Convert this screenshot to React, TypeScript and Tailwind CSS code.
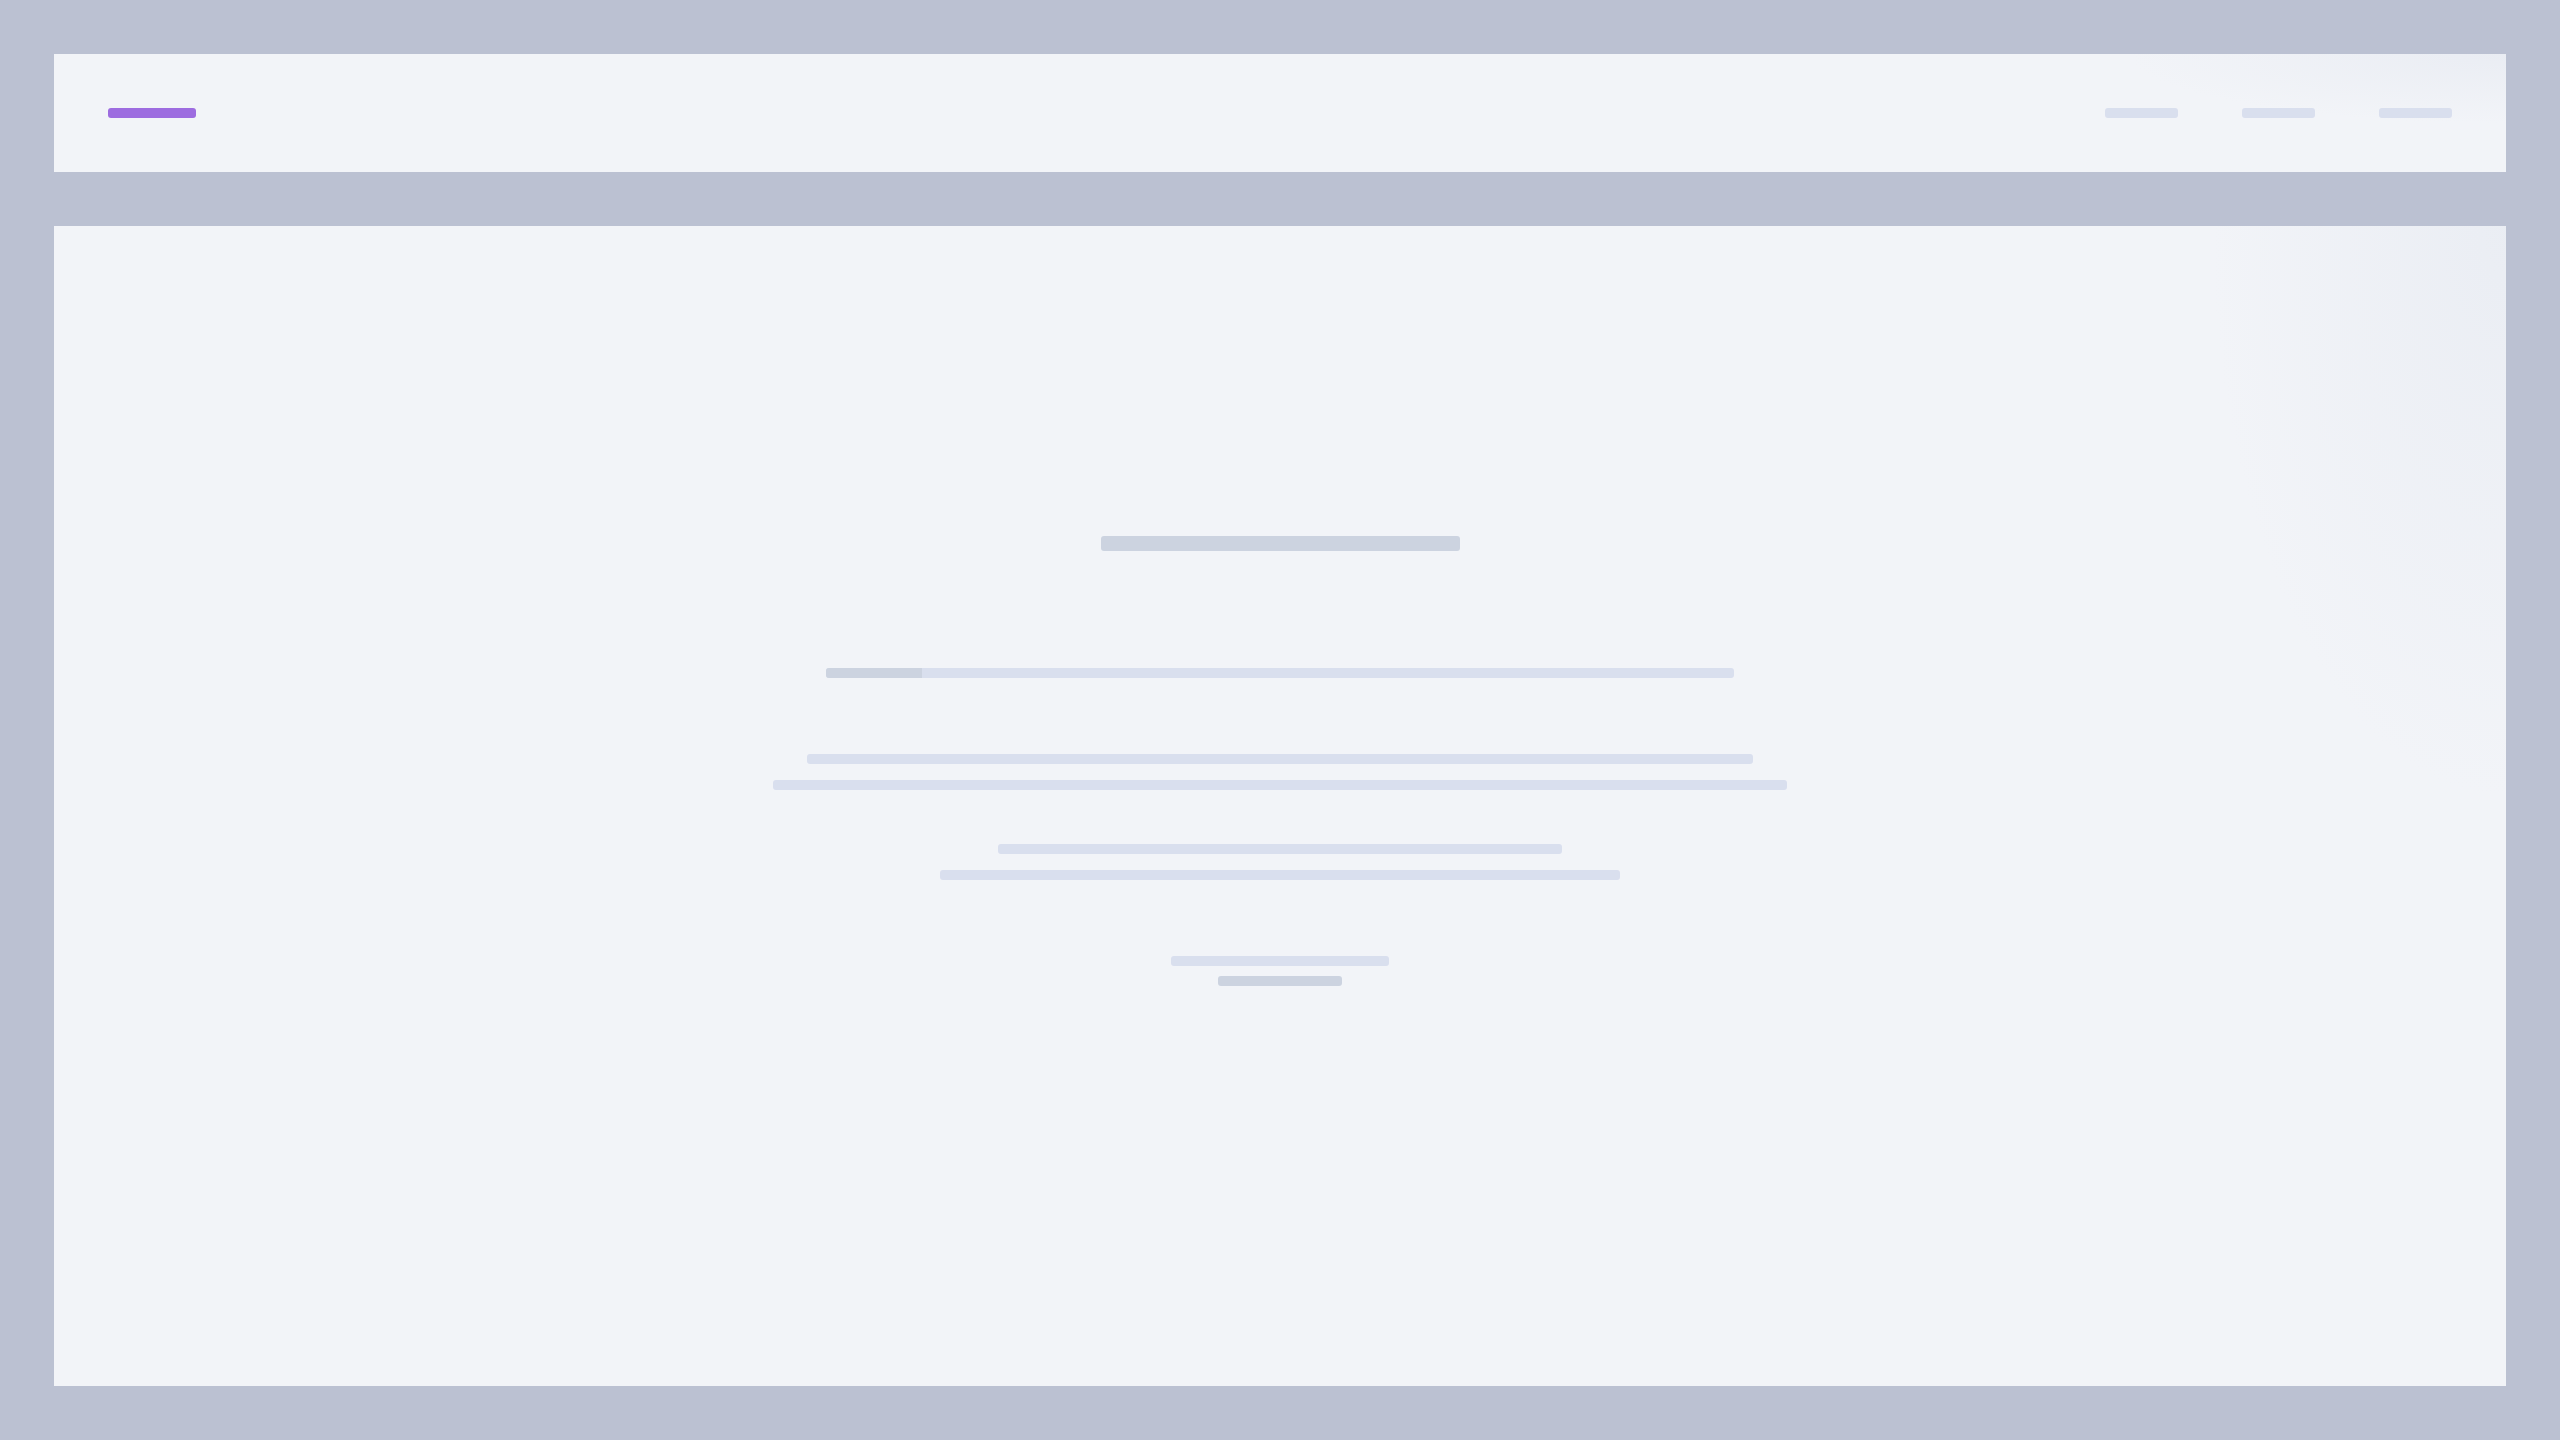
function Bar({ className }: { className: string }) {
    return <div className={`rounded-[3px] ${className}`} />;
}

function Header() {
    return (
        <div className="relative flex h-[118px] items-center justify-between overflow-hidden bg-[#f2f4f8] px-[54px]">
            <div className="pointer-events-none absolute right-0 top-0 h-[70px] w-[380px] bg-[radial-gradient(ellipse_at_top_right,rgba(226,230,239,0.5),rgba(242,244,248,0)_70%)]" />
            <Bar className="relative h-[10px] w-[88px] bg-[#9d6ce0]" />
            <div className="relative flex items-center gap-[64px]">
                <Bar className="h-[10px] w-[73px] bg-[#d9dfee]" />
                <Bar className="h-[10px] w-[73px] bg-[#d9dfee]" />
                <Bar className="h-[10px] w-[73px] bg-[#d9dfee]" />
            </div>
        </div>
    );
}

function Progress() {
    return (
        <div className="h-[10px] w-[908px] overflow-hidden rounded-[3px] bg-[#d9dfee]">
            <div className="h-full w-[96px] bg-[#ccd3e0]" />
        </div>
    );
}

export default function App() {
    return (
        <div className="flex h-[1440px] w-[2560px] flex-col gap-[54px] bg-[#bbc1d2] p-[54px]">
            <Header />
            <div className="relative flex flex-1 flex-col items-center overflow-hidden bg-[#f2f4f8] pt-[310px]">
                <div className="pointer-events-none absolute right-0 top-0 h-[620px] w-[320px] bg-[radial-gradient(ellipse_at_top_right,rgba(228,232,240,0.55),rgba(242,244,248,0)_65%)]" />
                <Bar className="h-[15px] w-[359px] bg-[#ccd3e0]" />
                <div className="mt-[117px]">
                    <Progress />
                </div>
                <div className="mt-[76px] flex flex-col items-center gap-[16px]">
                    <Bar className="h-[10px] w-[946px] bg-[#d9dfee]" />
                    <Bar className="h-[10px] w-[1014px] bg-[#d9dfee]" />
                </div>
                <div className="mt-[54px] flex flex-col items-center gap-[16px]">
                    <Bar className="h-[10px] w-[564px] bg-[#d9dfee]" />
                    <Bar className="h-[10px] w-[680px] bg-[#d9dfee]" />
                </div>
                <div className="mt-[76px] flex flex-col items-center gap-[10px]">
                    <Bar className="h-[10px] w-[218px] bg-[#d9dfee]" />
                    <Bar className="h-[10px] w-[124px] bg-[#ccd3e0]" />
                </div>
            </div>
        </div>
    );
}
